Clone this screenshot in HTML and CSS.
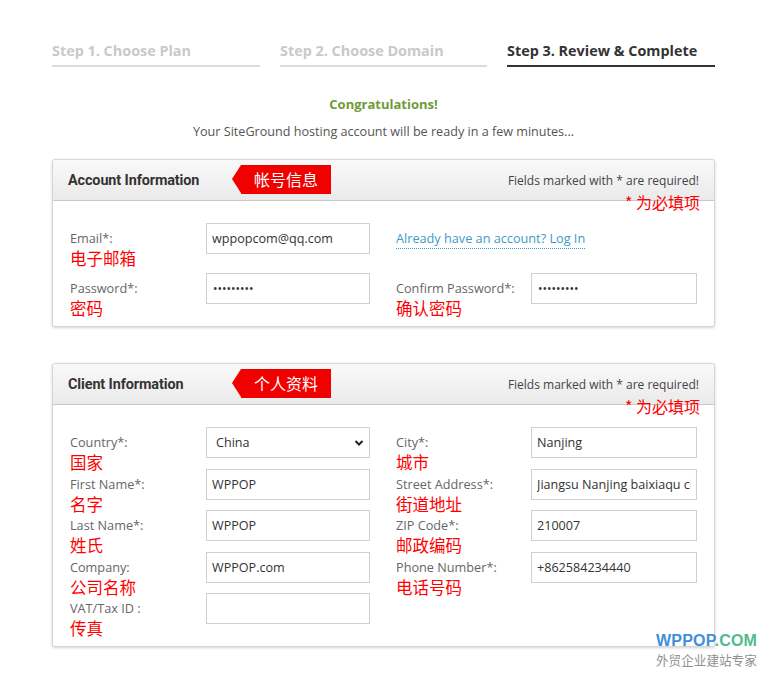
FILE: index.html
```html
<!DOCTYPE html>
<html>
<head>
<meta charset="utf-8">
<link rel="stylesheet" href="styles.css">
</head>
<body>
<div class="page">
  <div class="steps">
    <div class="step">Step 1. Choose Plan</div>
    <div class="step">Step 2. Choose Domain</div>
    <div class="step active">Step 3. Review &amp; Complete</div>
  </div>
  <div class="congrats">Congratulations!</div>
  <div class="subtitle">Your SiteGround hosting account will be ready in a few minutes...</div>

  <div class="card">
    <div class="card-head">
      <span class="card-title">Account Information</span>
      <span class="tag">帐号信息</span>
      <span class="req">Fields marked with * are required!</span>
    </div>
    <span class="req-cn">* 为必填项</span>
    <div class="card-body grid account">
      <div class="lbl">Email*:<span class="cn">电子邮箱</span></div>
      <input class="inp" type="text" value="wppopcom@qq.com">
      <div class="lbl right"><a class="link" href="#">Already have an account? Log In</a></div>
      <div></div>
      <div class="lbl">Password*:<span class="cn">密码</span></div>
      <input class="inp pw" type="text" value="•••••••••">
      <div class="lbl right">Confirm Password*:<span class="cn">确认密码</span></div>
      <input class="inp pw" type="text" value="•••••••••">
    </div>
  </div>

  <div class="card second">
    <div class="card-head">
      <span class="card-title">Client Information</span>
      <span class="tag">个人资料</span>
      <span class="req">Fields marked with * are required!</span>
    </div>
    <span class="req-cn">* 为必填项</span>
    <div class="card-body grid client">
      <div class="lbl">Country*:<span class="cn">国家</span></div>
      <div class="sel-wrap">
        <select class="inp sel"><option>China</option></select>
        <svg class="chev" width="10" height="8" viewBox="0 0 10 8"><path d="M1.5 2 L5 5.5 L8.5 2" fill="none" stroke="#222" stroke-width="2"/></svg>
      </div>
      <div class="lbl right">City*:<span class="cn">城市</span></div>
      <input class="inp" type="text" value="Nanjing">

      <div class="lbl">First Name*:<span class="cn">名字</span></div>
      <input class="inp" type="text" value="WPPOP">
      <div class="lbl right">Street Address*:<span class="cn">街道地址</span></div>
      <input class="inp" type="text" value="Jiangsu Nanjing baixiaqu changjianglu">

      <div class="lbl">Last Name*:<span class="cn">姓氏</span></div>
      <input class="inp" type="text" value="WPPOP">
      <div class="lbl right">ZIP Code*:<span class="cn">邮政编码</span></div>
      <input class="inp" type="text" value="210007">

      <div class="lbl">Company:<span class="cn">公司名称</span></div>
      <input class="inp" type="text" value="WPPOP.com">
      <div class="lbl right">Phone Number*:<span class="cn">电话号码</span></div>
      <input class="inp" type="text" value="+862584234440">

      <div class="lbl">VAT/Tax ID :<span class="cn">传真</span></div>
      <input class="inp" type="text" value="">
      <div></div>
      <div></div>
    </div>
  </div>
</div>
<div class="watermark">
  <div class="wm-logo"><span class="wm-blue">WPPOP</span><span class="wm-green">.COM</span></div>
  <div class="wm-sub">外贸企业建站专家</div>
</div>
</body>
</html>
```
FILE: styles.css
```css
* { box-sizing: border-box; }
html, body { margin: 0; padding: 0; background: #fff; }
body {
  font-family: "Open Sans", "Noto Sans CJK SC", sans-serif;
  color: #555;
  width: 772px;
  height: 680px;
  position: relative;
  overflow: hidden;
}
.page {
  width: 663px;
  margin-left: 52px;
  padding-top: 41px;
}
.steps {
  display: grid;
  grid-template-columns: 208px 207px 208px;
  column-gap: 20px;
}
.step {
  font-weight: 700;
  font-size: 14.4px;
  line-height: 20px;
  color: #c9c9c9;
  padding-bottom: 4px;
  border-bottom: 2px solid #dcdcdc;
}
.step.active {
  color: #333;
  border-bottom-color: #333;
}
.congrats {
  margin-top: 27px;
  text-align: center;
  font-size: 13px;
  font-weight: 700;
  color: #6e9b3a;
  line-height: 20px;
}
.subtitle {
  margin-top: 8px;
  text-align: center;
  font-size: 12.6px;
  color: #555;
  line-height: 20px;
}
.card {
  position: relative;
  margin-top: 17px;
  border: 1px solid #d6d6d6;
  border-radius: 3px;
  box-shadow: 0 1px 3px rgba(0,0,0,0.18);
  background: #fff;
}
.card.second { margin-top: 36px; }
.card-head {
  position: relative;
  height: 41px;
  display: flex;
  align-items: center;
  justify-content: space-between;
  padding: 0 15px 0 15px;
  background: linear-gradient(#f9f9f9, #eaeaea);
  border-bottom: 1px solid #c8c8c8;
  border-radius: 3px 3px 0 0;
}
.card-title {
  font-family: Roboto, "Liberation Sans", sans-serif;
  font-weight: 700;
  font-size: 14.4px;
  color: #333;
  letter-spacing: -0.1px;
}
.req {
  font-size: 12px;
  color: #444;
}
.tag {
  position: absolute;
  left: 188px;
  top: 5px;
  height: 29px;
  width: 90px;
  background: #f10000;
  color: #fff;
  font-family: "Noto Sans CJK SC", sans-serif;
  font-size: 16px;
  line-height: 29px;
  padding-left: 13px;
}
.tag::before {
  content: "";
  position: absolute;
  left: -9px;
  top: 0;
  border-top: 14.5px solid transparent;
  border-bottom: 14.5px solid transparent;
  border-right: 9px solid #f10000;
}
.req-cn {
  position: absolute;
  right: 14px;
  top: 32px;
  font-family: "Noto Sans CJK SC", sans-serif;
  font-size: 16px;
  line-height: 20px;
  color: #f00;
}
.card-body {
  padding: 22px 17px 22px 17px;
}
.grid {
  display: grid;
  grid-template-columns: 136px 164px 161px 166px;
  align-items: start;
}
.grid.account { row-gap: 19px; }
.grid.client { row-gap: 10.5px; }
.lbl {
  font-size: 12.7px;
  color: #666;
  line-height: 20px;
  padding-top: 5px;
  height: 31px;
  white-space: nowrap;
}
.lbl.right { padding-left: 26px; }
.cn {
  display: block;
  font-family: "Noto Sans CJK SC", sans-serif;
  font-size: 16.5px;
  line-height: 21px;
  color: #f00;
}
.link {
  color: #3d9bc7;
  text-decoration: none;
  border-bottom: 1px dotted #3d9bc7;
  padding-bottom: 1px;
}
.inp {
  width: 100%;
  height: 31px;
  border: 1px solid #cfcfcf;
  background: #fff;
  font-family: "Open Sans", sans-serif;
  font-size: 12.6px;
  color: #333;
  padding: 0 5px;
  margin: 0;
  outline: none;
}
.inp.pw { font-size: 12px; letter-spacing: 0; padding-left: 6px; }
.sel-wrap { position: relative; }
.sel {
  -webkit-appearance: none;
  appearance: none;
  padding-left: 9px;
  border-radius: 0;
}
.chev {
  position: absolute;
  right: 6px;
  top: 12px;
}
.watermark {
  position: absolute;
  left: 656px;
  top: 632px;
  text-align: left;
}
.wm-logo {
  font-family: "Liberation Sans", Arial, sans-serif;
  font-weight: 700;
  font-size: 16px;
  line-height: 18px;
  letter-spacing: 0.2px;
}
.wm-blue { color: #3f8fdb; }
.wm-green { color: #4fbb8f; }
.wm-sub {
  font-family: "Noto Sans CJK SC", sans-serif;
  font-size: 12.6px;
  color: #8f8f8f;
  line-height: 18px;
  margin-top: 1px;
}
```
